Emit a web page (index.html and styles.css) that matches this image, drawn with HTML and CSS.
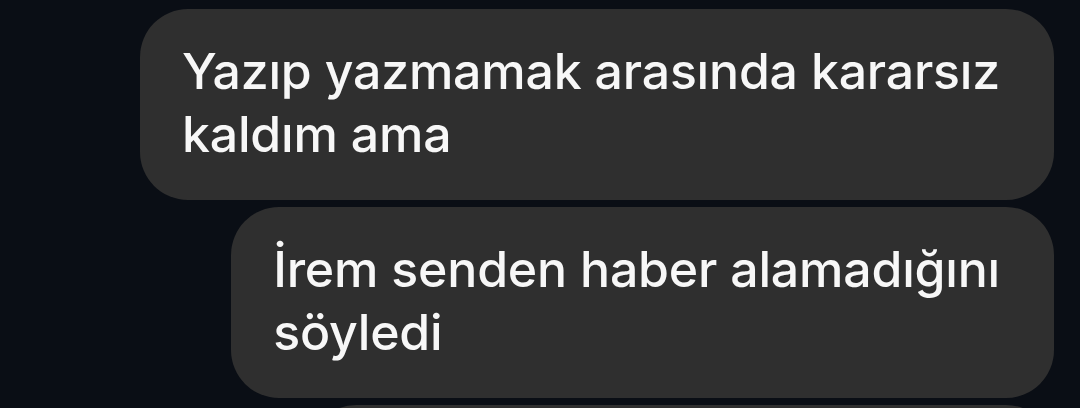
FILE: index.html
```html
<!DOCTYPE html>
<html lang="tr">
<head>
<meta charset="utf-8">
<link rel="stylesheet" href="styles.css">
</head>
<body>
    <div class="thread">
        <div class="bubble">Yazıp yazmamak arasında kararsız<br>kaldım ama</div>
        <div class="bubble">İrem senden haber alamadığını<br>söyledi</div>
        <div class="bubble next">&nbsp;</div>
    </div>
</body>
</html>
```

FILE: styles.css
```css
html, body {
    margin: 0;
    padding: 0;
    width: 100%;
    height: 100%;
    overflow: hidden;
}
body {
    background: #0a0e15;
    font-family: Inter, "Noto Sans", sans-serif;
}
.thread {
    display: flex;
    flex-direction: column;
    align-items: flex-end;
    gap: 7px;
    padding: 9px 26px 0 0;
}
.bubble {
    background: #2f2f2f;
    color: #f7f7f7;
    font-size: 50px;
    font-weight: 500;
    letter-spacing: -0.2px;
    line-height: 62.5px;
    padding: 31px 54px 35px 42px;
    border-radius: 48px;
    white-space: nowrap;
}
.bubble.next {
    width: 650px;
}
```
